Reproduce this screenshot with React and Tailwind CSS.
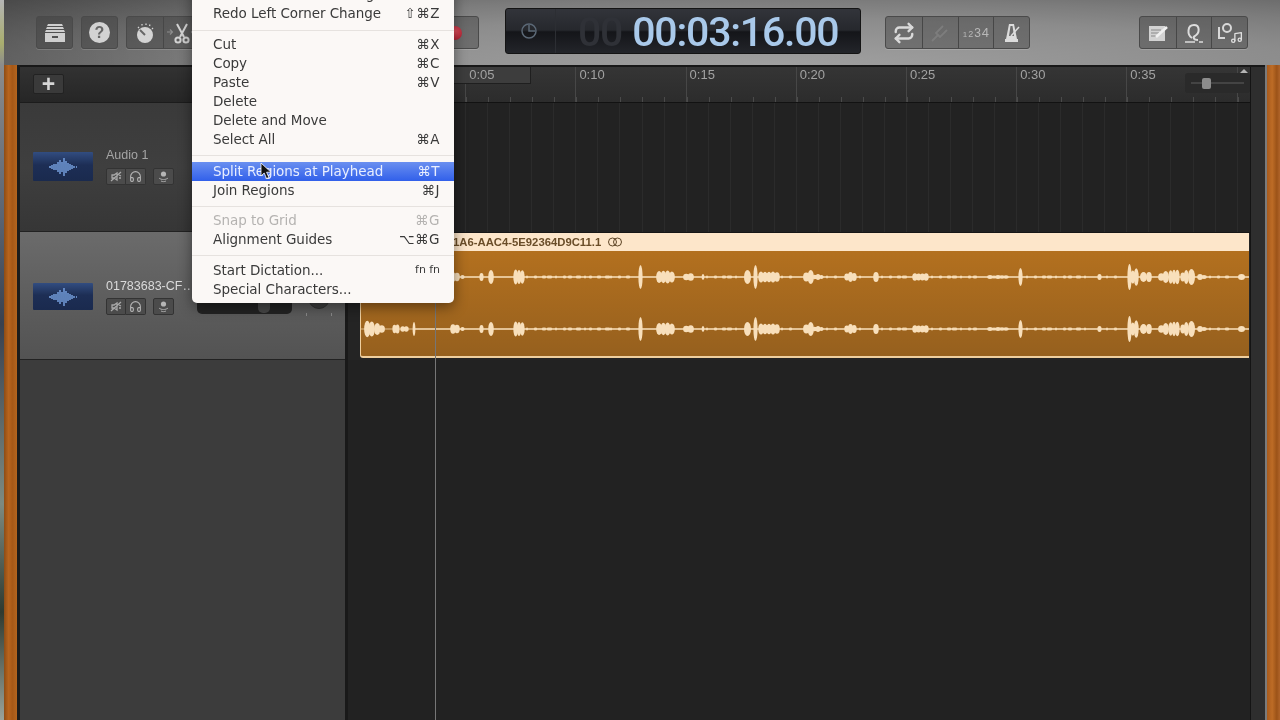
import React from 'react';
import { Repeat, Headphones, Music } from 'lucide-react';

const menuFont = { fontFamily: '"DejaVu Sans", sans-serif' };

const rulerMarks = ['', '0:05', '0:10', '0:15', '0:20', '0:25', '0:30', '0:35', ''];

// [from, to, half height] in px along the region
const blobs = [
  [4, 13, 9], [14, 23, 6], [32, 38, 5], [40, 47, 3], [52, 54, 7], [90, 98, 5], [100, 103, 2],
  [119, 122, 4], [128, 132, 7], [153, 163, 8], [278, 281, 12], [296, 313, 7], [323, 332, 4],
  [341, 343, 3], [384, 389, 7], [393, 396, 12], [398, 418, 6], [443, 452, 7], [452, 462, 3],
  [484, 495, 5], [513, 517, 5], [552, 567, 4], [627, 647, 2], [658, 661, 9], [737, 740, 3],
  [767, 770, 13], [770, 777, 9], [780, 785, 5], [786, 790, 5], [798, 807, 6], [808, 818, 8],
  [820, 827, 7], [828, 833, 8], [837, 845, 3], [878, 883, 3],
];

const dashes = [
  [165, 275], [345, 380], [420, 440], [465, 480], [498, 510], [520, 550], [570, 625],
  [665, 730], [745, 765], [848, 875],
];

// break wide blobs into little bumps so they read as audio, not boxes
function bumps(a, b, h) {
  const n = Math.max(1, Math.round((b - a) / 4));
  const w = (b - a) / n;
  return Array.from({ length: n }, (_, i) => ({
    cx: a + w * (i + 0.5),
    rx: w * 0.7,
    ry: n === 1 ? h : h * (0.62 + 0.38 * Math.abs(Math.sin(i * 1.7 + a))),
  }));
}

function Waveform({ y }) {
  return (
    <g fill="#f8dfbb">
      <rect x="53" y={y - 0.8} width="836" height="1.6" opacity="0.95" />
      <rect x="0" y={y - 0.6} width="54" height="1.2" opacity="0.6" />
      {blobs.flatMap(([a, b, h]) =>
        bumps(a, b, h).map((s) => <ellipse key={`${a}-${s.cx}`} cx={s.cx} cy={y} rx={s.rx} ry={s.ry} />)
      )}
      {dashes.flatMap(([a, b]) =>
        Array.from({ length: Math.floor((b - a) / 7) }, (_, i) => (
          <rect key={`${a}-${i}`} x={a + i * 7 + (i % 3)} y={y - 1.4} width={2 + (i % 4)} height="2.8" rx="1" opacity="0.85" />
        ))
      )}
    </g>
  );
}

function ToolButton({ children, className = '' }) {
  return (
    <div className={`h-[33px] flex items-center justify-center rounded-[3px] border border-[#4a4a4a] bg-[rgba(60,60,60,0.42)] shadow-[0_1px_0_rgba(255,255,255,0.15)] ${className}`}>
      {children}
    </div>
  );
}

function Cell({ children }) {
  return <div className="w-[36px] h-full flex items-center justify-center border-l border-[#474747] first:border-l-0">{children}</div>;
}

function MiniButton({ children, className = '' }) {
  return (
    <div className={`h-[17px] flex items-center justify-center rounded-[2px] border border-[#333] bg-[#4b4b4b] ${className}`}>
      {children}
    </div>
  );
}

function TrackTile({ height }) {
  return (
    <div className={`w-[60px] ${height} flex items-center justify-center bg-[linear-gradient(180deg,#324d80,#1d2e55_45%,#1a2a4e)] rounded-[1px]`}>
      <svg width="30" height="22" viewBox="0 0 30 22" stroke="#7ba6e6" strokeWidth="1.4">
        <path d="M1 11h2M4 9v4M6 8v6M8 8v6M10 6v10M12 4v14M14 6v10M16 2v18M18 5v12M20 7v8M22 8v6M24 9v4M26 10v2M28 11h1" />
      </svg>
    </div>
  );
}

function TrackControls() {
  return (
    <div className="flex gap-[7px]">
      <div className="flex">
        <MiniButton className="w-[20px] rounded-r-none">
          <svg width="13" height="13" viewBox="0 0 13 13" fill="none" stroke="#a9a9a9" strokeWidth="1.3">
            <path d="M2 5h2l3-2v7L4 8H2zM1 11l10-9" />
            <path d="M9 5l2 1M9 8l2 0" />
          </svg>
        </MiniButton>
        <MiniButton className="w-[20px] rounded-l-none border-l-0">
          <Headphones size={13} color="#b5b5b5" strokeWidth={2} />
        </MiniButton>
      </div>
      <MiniButton className="w-[21px]">
        <svg width="13" height="13" viewBox="0 0 13 13" fill="none" stroke="#a9a9a9">
          <circle cx="6.5" cy="4" r="2.6" fill="#b5b5b5" stroke="none" />
          <path d="M2 8c2 2 7 2 9 0M4 11c1.500 .8 3.500 .8 5 0" />
        </svg>
      </MiniButton>
    </div>
  );
}

function MenuRow({ label, keys, active, disabled, small }) {
  const tone = active
    ? 'text-[#e8eeff] bg-[linear-gradient(180deg,#6a8ff0,#3160ea)]'
    : disabled
      ? 'text-[#b5b3b1]'
      : 'text-[#3a3a3a]';
  return (
    <div className={`h-[19px] pl-[21px] pr-[14px] flex items-center justify-between ${tone}`}>
      <span>{label}</span>
      {keys && <span className={small ? 'text-[11px]' : 'tracking-[0.5px]'}>{keys}</span>}
    </div>
  );
}

function MenuLine({ height, pad = '' }) {
  return (
    <div className={`${height} ${pad} flex items-center`}>
      <div className="w-full h-px bg-[#e6e2df]" />
    </div>
  );
}

function ContextMenu() {
  return (
    <div style={menuFont} className="absolute left-[192px] top-[-15px] w-[262px] pb-[4px] bg-[#fbf8f6] rounded-b-[5px] text-[13.5px] tracking-[-0.05px] shadow-[0_4px_14px_rgba(0,0,0,0.45)]">
      <MenuRow label="Undo Left Corner Change" />
      <MenuRow label="Redo Left Corner Change" keys="⇧⌘Z" />
      <MenuLine height="h-[12px]" pad="pt-[3px]" />
      <MenuRow label="Cut" keys="⌘X" />
      <MenuRow label="Copy" keys="⌘C" />
      <MenuRow label="Paste" keys="⌘V" />
      <MenuRow label="Delete" />
      <MenuRow label="Delete and Move" />
      <MenuRow label="Select All" keys="⌘A" />
      <MenuLine height="h-[13px]" />
      <MenuRow label="Split Regions at Playhead" keys="⌘T" active />
      <MenuRow label="Join Regions" keys="⌘J" />
      <MenuLine height="h-[11px]" pad="pt-[2px]" />
      <MenuRow label="Snap to Grid" keys="⌘G" disabled />
      <MenuRow label="Alignment Guides" keys="⌥⌘G" />
      <MenuLine height="h-[12px]" />
      <MenuRow label="Start Dictation..." keys="fn fn" small />
      <MenuRow label="Special Characters..." />
    </div>
  );
}

function Toolbar() {
  return (
    <div className="h-[65px] shrink-0 flex items-center pl-[32px] bg-[linear-gradient(90deg,rgba(0,0,0,0.22),transparent_30%),radial-gradient(ellipse_at_60%_100%,#a0a0a0,#8c8c8c_50%,#7c7c7c_70%,#5e5e5e)]">
      <ToolButton className="w-[37px]">
        <svg width="24" height="22" viewBox="0 0 24 22" fill="#cfcfcf">
          <path d="M5 2h14l1 2H4zM4 5h16l1 2H3zM3 8h18l1 2H2z" />
          <path d="M2 11h20v9H2zM9 14v2h6v-2z" />
        </svg>
      </ToolButton>
      <ToolButton className="w-[37px] ml-[8px]">
        <div className="w-[21px] h-[21px] rounded-full bg-[#d2d2d2] flex items-center justify-center text-[#666] text-[16px] font-bold font-['Liberation_Sans',sans-serif]">?</div>
      </ToolButton>
      <ToolButton className="w-[353px] ml-[8px] justify-start">
        <Cell>
          <svg width="22" height="24" viewBox="0 0 22 24">
            <circle cx="11" cy="14" r="8" fill="#d4d4d4" />
            <path d="M11 14L6 9" stroke="#666" strokeWidth="2" />
            <path d="M4 6l1 1M8 3v1.500M12 2.500v1.500M16 3.500l-.5 1.500M19 7l-1 1" stroke="#d4d4d4" strokeWidth="1.300" />
          </svg>
        </Cell>
        <Cell>
          <svg width="32" height="24" viewBox="0 0 32 24" fill="none" stroke="#d4d4d4" strokeWidth="2">
            <path d="M11 3l7 13M21 3l-7 13" />
            <circle cx="12" cy="19" r="2.600" />
            <circle cx="20" cy="19" r="2.600" />
            <path d="M1 11h5M4 8.500L6.500 11 4 13.500M31 11h-5M28 8.500L25.500 11l2.500 2.500" stroke="#8d8d8d" strokeWidth="1.200" />
          </svg>
        </Cell>
        <div className="flex-1 h-full flex items-center justify-end pr-[16px]">
          <div className="w-[14px] h-[14px] rounded-full bg-[radial-gradient(circle_at_50%_35%,#e4505e,#a8182a)]" />
        </div>
      </ToolButton>

      <div className="w-[356px] h-[46px] ml-[26px] self-start mt-[8px] flex items-center rounded-[3px] border border-[#141414] bg-[linear-gradient(180deg,#32343a,#26282d_48%,#141519_52%,#23252a)] overflow-hidden font-['Roboto',sans-serif]">
        <div className="w-[50px] h-full flex items-center justify-center pr-[4px] border-r border-[#2c2e33]">
          <svg width="18" height="18" viewBox="0 0 18 18" fill="none" stroke="#5b6876" strokeWidth="1.500">
            <circle cx="9" cy="9" r="7" />
            <path d="M9 3v6h6" />
          </svg>
        </div>
        <span className="ml-[22px] mt-[2px] text-[41px] font-medium leading-none tracking-[-1.2px] text-[#2f3137]">00</span>
        <span className="ml-[10px] mt-[2px] text-[41px] font-medium leading-none tracking-[-1.2px] text-[#a9c9ea]">00:03:16.00</span>
      </div>

      <ToolButton className="w-[145px] ml-[24px] justify-start">
        <Cell><Repeat size={22} color="#dadada" strokeWidth={2.6} /></Cell>
        <Cell>
          <svg width="22" height="22" viewBox="0 0 22 22" fill="none" stroke="#7d7d7d" strokeWidth="1.800">
            <path d="M3 19l6-6M9 13l-2-2 7-7M9 13l2 2 7-7" />
          </svg>
        </Cell>
        <Cell>
          <span className="font-['Liberation_Sans',sans-serif] text-[#b8b8b8] leading-none flex items-baseline gap-[1px]">
            <span className="text-[8px]">1</span>
            <span className="text-[9px]">2</span>
            <span className="text-[12px]">3</span>
            <span className="text-[13px]">4</span>
          </span>
        </Cell>
        <Cell>
          <svg width="20" height="22" viewBox="0 0 20 22" fill="#dcdcdc">
            <path d="M7 2h5l3 15H4zM8.500 4L7 14h5l-1.500-10z" />
            <path d="M3 17h13v3H3z" />
            <path d="M9 14l8-9" stroke="#dcdcdc" strokeWidth="1.500" />
          </svg>
        </Cell>
      </ToolButton>

      <ToolButton className="w-[109px] ml-[109px] justify-start">
        <Cell>
          <svg width="24" height="22" viewBox="0 0 24 22" fill="none">
            <path d="M3 4h16v15H3z" fill="#d2d2d2" />
            <path d="M5 8h10M5 11h8M5 14h6" stroke="#8a8a8a" strokeWidth="1.200" />
            <path d="M10 15l11-10" stroke="#f0f0f0" strokeWidth="2.600" />
          </svg>
        </Cell>
        <Cell>
          <svg width="24" height="24" viewBox="0 0 24 24" fill="none" stroke="#dcdcdc" strokeWidth="2">
            <path d="M10 17C5 14 5 4 12 4c6 0 6 8 1 11-2 1-2 4 3 4" />
            <path d="M3 21h10M17 21h4" strokeWidth="1.600" />
          </svg>
        </Cell>
        <Cell>
          <div className="relative w-[26px] h-[22px]">
            <svg width="16" height="20" viewBox="0 0 16 20" fill="none" stroke="#d8d8d8" strokeWidth="2">
              <path d="M2 5v11h6" />
              <circle cx="10" cy="6" r="4" />
            </svg>
            <Music size={13} color="#e0e0e0" strokeWidth={2.400} className="absolute right-0 bottom-0" />
          </div>
        </Cell>
      </ToolButton>
    </div>
  );
}

function TrackHeaders() {
  return (
    <div className="w-[325px] shrink-0 flex flex-col font-['Liberation_Sans',sans-serif] bg-[#3c3c3c]">
      <div className="h-[36px] shrink-0 flex items-center pl-[13px] bg-[linear-gradient(180deg,#323232,#262626)] border-b border-[#1c1c1c]">
        <div className="w-[31px] h-[20px] -mt-[1px] flex items-center justify-center rounded-[2px] bg-[#3a3a3a] border border-[#222] text-[#d6d6d6] text-[23px] font-bold leading-none">+</div>
      </div>

      <div className="h-[129px] shrink-0 flex items-start pl-[13px] pt-[49px] gap-[13px] bg-[linear-gradient(180deg,#3a3a3a,#3f3f3f_50%,#363636)] border-b border-[#222]">
        <TrackTile height="h-[29px]" />
        <div className="-mt-[4px]">
          <div className="h-[14px] mb-[6px] text-[12.5px] leading-[14px] text-[#a5a5a5]">Audio 1</div>
          <TrackControls />
        </div>
      </div>

      <div className="h-[128px] shrink-0 flex items-start pl-[13px] pt-[51px] bg-[linear-gradient(180deg,#6b6b6b,#5e5e5e_50%,#535353)] border-b border-[#222]">
        <TrackTile height="h-[27px]" />
        <div className="w-[91px] ml-[13px] -mt-[4px] shrink-0">
          <div className="h-[14px] mb-[5px] text-[12.5px] leading-[14px] text-[#dadada] whitespace-nowrap">01783683-CF…</div>
          <TrackControls />
        </div>
        <div className="w-[95px] h-[22px] mt-[9px] shrink-0 flex justify-end pr-[22px] rounded-[5px] bg-[#232323]">
          <div className="w-[12px] h-[21px] rounded-[5px] bg-[#474747]" />
        </div>
        <div className="w-[26px] mt-[4px] ml-[14px] shrink-0 flex flex-col items-center">
          <div className="w-[22px] h-[22px] rounded-full bg-[#404040] border border-[#333]" />
          <div className="w-full mt-[4px] flex justify-between">
            <div className="w-px h-[3px] bg-[#8a8a8a]" />
            <div className="w-px h-[3px] bg-[#8a8a8a]" />
          </div>
        </div>
      </div>

      <div className="flex-1" />
    </div>
  );
}

function Ruler() {
  return (
    <div className="h-[36px] shrink-0 flex pl-[7px] overflow-hidden bg-[linear-gradient(180deg,#353535,#2c2c2c)] border-b border-[#121212] font-['Liberation_Sans',sans-serif]">
      {rulerMarks.map((mark, i) => (
        <div key={i} className="w-[110.2px] h-full shrink-0 pl-[3px] border-l border-[#474747] text-[13px] leading-[14px] text-[#a2a2a2] bg-[repeating-linear-gradient(90deg,#4a4a4a_0,#4a4a4a_1px,transparent_1px,transparent_22.04px)] bg-[length:100%_5px] bg-bottom bg-no-repeat">
          <span className="relative z-10 block pt-[1px]">{mark}</span>
        </div>
      ))}
    </div>
  );
}

function Timeline() {
  return (
    <div className="relative w-[902px] shrink-0 flex flex-col bg-[#222222] overflow-hidden">
      <Ruler />
      <div className="h-[130px] shrink-0 bg-[#222222] bg-[repeating-linear-gradient(90deg,#2b2b2b_0,#2b2b2b_1px,transparent_1px,transparent_22.04px)] bg-[position:7px_0] border-b border-[#171717]" />
      <div className="h-[127px] shrink-0 pl-[12px] pr-[1px] bg-[#242424]">
        <div className="h-[125px] flex flex-col overflow-hidden rounded-bl-[3px] border-l border-b-2 border-[#efcf9f] bg-[linear-gradient(180deg,#b8731f,#96601e)]">
          <div className="h-[18px] shrink-0 flex items-center gap-[6px] pl-[92px] bg-[#fde6ca] font-['Liberation_Sans',sans-serif] text-[11.3px] font-bold text-[#6a4d28] whitespace-nowrap">
            <span>1A6-AAC4-5E92364D9C11.1</span>
            <svg width="16" height="10" viewBox="0 0 16 10" fill="none" stroke="#5e4526">
              <circle cx="5.500" cy="5" r="4" />
              <circle cx="10.500" cy="5" r="4" />
            </svg>
          </div>
          <svg width="889" height="105" viewBox="0 0 889 105" className="shrink-0">
            <Waveform y={26} />
            <Waveform y={78} />
          </svg>
        </div>
      </div>

      {/* Cycle strip and playhead sit on top of the ruler and tracks */}
      <div className="absolute left-[60px] top-0 w-[123px] h-[17px] bg-[#3d3d3d] border-r border-b border-[#1f1f1f]" />
      <div className="absolute left-[87px] top-0 bottom-0 w-px bg-[#767676]" />

      {/* Zoom slider */}
      <div className="absolute right-[0px] top-[6px] w-[65px] h-[20px] rounded-[3px] bg-[#2a2a2a] flex items-center px-[6px]">
        <div className="w-full h-[2px] bg-[#444] flex items-center">
          <div className="ml-[11px] w-[9px] h-[11px] rounded-[2px] bg-[#8c8c8c]" />
        </div>
      </div>
      <div className="absolute right-[2px] top-[2px] w-[8px] h-[4px] bg-[#b5b5b5] [clip-path:polygon(50%_0,100%_100%,0_100%)]" />
    </div>
  );
}

export default function App() {
  return (
    <div className="relative w-[1280px] h-[720px] flex overflow-hidden bg-[#333] blur-[0.4px]">
      <div className="w-[4px] shrink-0 bg-[linear-gradient(180deg,#b5b5b5,#a9ae6e_6%,#8c8c8c_9%,#5b6472_30%,#39414f_45%,#7d8a80_70%,#2f3a30_85%,#9aa39a)]" />

      <div className="flex-1 flex flex-col min-w-0">
        <Toolbar />
        <div className="flex-1 flex min-h-0">
          <div className="w-[13px] shrink-0 bg-[linear-gradient(90deg,#8d4c15,#b8641d_35%,#a65817_65%,#b4651f)]" />
          <div className="flex-1 flex min-w-0 bg-[#2b2b2b]">
            <div className="w-[3px] shrink-0 bg-[#1c1c1c]" />
            <div className="flex-1 flex flex-col min-w-0">
              <div className="h-[2px] shrink-0 bg-[#181818]" />
              <div className="flex-1 flex min-h-0">
                <TrackHeaders />
                <div className="w-[3px] shrink-0 bg-[#191919]" />
                <Timeline />
                <div className="w-[15px] shrink-0 border-l border-[#141414] bg-[#2e2e2e]" />
              </div>
            </div>
            <div className="w-[15px] shrink-0 border-l-2 border-[#7b7b7b] bg-[linear-gradient(90deg,#a85a1c,#bd6c26_40%,#9c5318_75%,#b0642a)]" />
          </div>
        </div>
      </div>

      <ContextMenu />

      {/* Mouse pointer over the menu */}
      <svg width="13" height="19" viewBox="0 0 13 19" className="absolute left-[260px] top-[162px]">
        <path d="M1 1v13l3.200-3 2.300 5.500 2.400-1-2.300-5.300H11z" fill="#111" stroke="#fff" strokeWidth="0.800" />
      </svg>
    </div>
  );
}
